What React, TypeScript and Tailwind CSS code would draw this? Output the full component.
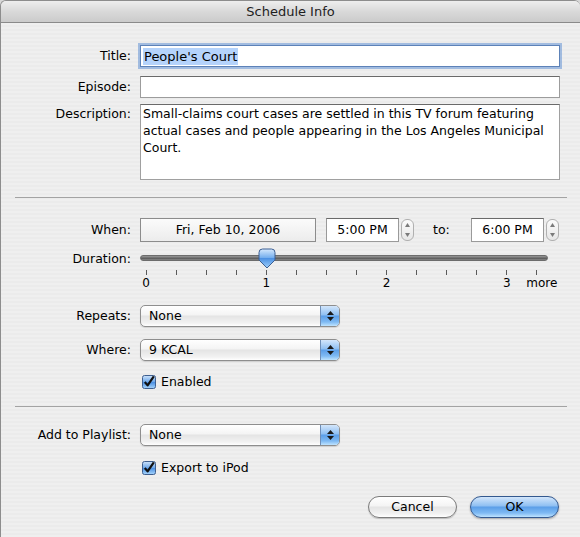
import type { ReactNode } from 'react';

const FONT = "font-['Lucida_Grande','DejaVu_Sans',sans-serif]";

// aqua gloss fills
const GLOSS_WHITE =
  'bg-[linear-gradient(180deg,#ffffff_0%,#f4f4f4_45%,#e4e4e4_50%,#f2f2f2_85%,#ffffff_100%)]';
const GLOSS_BLUE =
  'bg-[linear-gradient(180deg,#d3e6fb_0%,#8ebff2_45%,#5b9ee8_50%,#7fbaf3_80%,#bfe4ff_100%)]';

const TICKS = [
  '0', '', '', '', '1', '', '', '', '2', '', '', '', '3', 'more',
];

function Row({ label, children, className = '' }: { label?: string; children: ReactNode; className?: string }) {
  return (
    <div className={`flex items-center ${className}`}>
      <div className="w-[130px] shrink-0 text-right">{label}</div>
      <div className="ml-[9px] flex items-center">{children}</div>
    </div>
  );
}

function Separator({ className = '' }: { className?: string }) {
  return <div className={`ml-[14px] mr-[13px] h-px bg-[#a3a3a3] ${className}`} />;
}

function PopUp({ value }: { value: string }) {
  return (
    <div
      className={`flex h-[22px] w-[200px] items-stretch overflow-hidden rounded-[5px] border border-[#8e8e8e] ${GLOSS_WHITE} shadow-[0_1px_1px_rgba(0,0,0,0.12)]`}
    >
      <div className="flex flex-1 items-center pl-[8px]">{value}</div>
      <div className={`flex w-[19px] flex-col items-center justify-center gap-[2px] border-l border-[#6f8fb8] ${GLOSS_BLUE}`}>
        <svg width="7" height="4" viewBox="0 0 7 4">
          <path d="M3.5 0 L7 4 H0 Z" fill="#1a1a1a" />
        </svg>
        <svg width="7" height="4" viewBox="0 0 7 4">
          <path d="M0 0 H7 L3.5 4 Z" fill="#1a1a1a" />
        </svg>
      </div>
    </div>
  );
}

function Stepper() {
  return (
    <div className="ml-[2px] flex h-[22px] w-[13px] flex-col items-center justify-between rounded-[6px] border border-[#b0b0b0] bg-[linear-gradient(180deg,#fbfbfb,#e6e6e6)] py-[3px]">
      <svg width="5" height="4" viewBox="0 0 5 4">
        <path d="M2.5 0 L5 4 H0 Z" fill="#7a7a7a" />
      </svg>
      <svg width="5" height="4" viewBox="0 0 5 4">
        <path d="M0 0 H5 L2.5 4 Z" fill="#7a7a7a" />
      </svg>
    </div>
  );
}

function Check({ label, className = '' }: { label: string; className?: string }) {
  return (
    <div className={`flex h-[14px] items-center ${className}`}>
      <div className="w-[130px] shrink-0" />
      <div className="ml-[11px] flex items-center leading-[14px]">
        <svg width="14" height="14" viewBox="0 0 14 14">
          <defs>
            <linearGradient id="cb" x1="0" y1="0" x2="0" y2="1">
              <stop offset="0" stopColor="#cfe4fb" />
              <stop offset="0.5" stopColor="#6ba6ea" />
              <stop offset="0.52" stopColor="#4a8fe2" />
              <stop offset="1" stopColor="#a9d6fc" />
            </linearGradient>
          </defs>
          <rect x="0.5" y="0.5" width="13" height="13" rx="2" fill="url(#cb)" stroke="#3f5f8f" />
          <path d="M2.8 7 L5.6 10.4 L11.8 1.4" fill="none" stroke="#111" strokeWidth="2.2" strokeLinejoin="round" />
        </svg>
        <span className="ml-[5px]">{label}</span>
      </div>
    </div>
  );
}

function Duration() {
  return (
    <div className="w-[408px]">
      {/* track + thumb */}
      <div className="relative flex h-[22px] items-center">
        <div className="h-[6px] w-full rounded-full border border-[#6c6c6c] bg-[linear-gradient(180deg,#9a9a9a,#5e5e5e_60%,#8a8a8a)]" />
        <svg className="absolute left-[118px] top-[1px]" width="18" height="21" viewBox="0 0 18 21">
          <defs>
            <linearGradient id="th" x1="0" y1="0" x2="0" y2="1">
              <stop offset="0" stopColor="#d6e9fd" />
              <stop offset="0.45" stopColor="#76afee" />
              <stop offset="0.5" stopColor="#4d91e3" />
              <stop offset="1" stopColor="#9fd0fb" />
            </linearGradient>
          </defs>
          <path
            d="M1 4.5 Q1 1 4.5 1 H13.5 Q17 1 17 4.5 V12 L9 20 L1 12 Z"
            fill="url(#th)"
            stroke="#3d5f92"
          />
        </svg>
      </div>
      {/* tick marks and scale */}
      <div className="ml-[6px] mt-[1px] flex w-[391px] justify-between text-[12px]">
        {TICKS.map((t, i) => (
          <div key={i} className="flex w-0 flex-col items-center">
            <div className="h-[5px] min-w-px border-l border-[#5a5a5a]" />
            <div className={`h-[16px] whitespace-nowrap pt-[1px] leading-[15px] ${t === 'more' ? 'pl-[10px]' : ''}`}>{t}</div>
          </div>
        ))}
      </div>
    </div>
  );
}

export default function App() {
  return (
    <div className={`h-[537px] w-[580px] overflow-hidden bg-[#d8d8d8] ${FONT} text-[12.5px] text-black`}>
      <div className="flex h-full flex-col overflow-hidden rounded-t-[6px] border-l border-t border-[#8d8d8d]">
        {/* title bar */}
        <div className="flex h-[22px] shrink-0 items-center justify-center border-b border-[#8a8a8a] bg-[linear-gradient(180deg,#eeeeee,#d9d9d9_50%,#cbcbcb)] text-[13px] text-[#1e1e1e]">
          Schedule Info
        </div>

        <div className="flex-1 bg-[repeating-linear-gradient(180deg,#efefef_0px,#efefef_2px,#ebebeb_2px,#ebebeb_4px)] pt-[22px]">
          <Row label="Title:">
            <div className="flex h-[22px] w-[420px] items-center border border-[#5d82b8] bg-white pl-[2px] shadow-[0_0_0_2px_rgba(120,160,215,0.65)]">
              <span className="bg-[#b5d3fb] px-[1px] text-[13px] leading-[17px]">People's Court</span>
            </div>
          </Row>

          <Row label="Episode:" className="mt-[9px]">
            <div className="h-[22px] w-[420px] border border-[#9c9c9c] border-t-[#6a6a6a] bg-white" />
          </Row>

          <div className="mt-[6px] flex">
            <div className="w-[130px] shrink-0 pt-[1px] text-right leading-[17px]">Description:</div>
            <div className="ml-[9px] h-[76px] w-[420px] border border-[#a0a0a0] border-t-[#6a6a6a] bg-white px-[2px] pt-0 leading-[17px]">
              Small-claims court cases are settled in this TV forum featuring actual cases and people appearing in the Los Angeles Municipal Court.
            </div>
          </div>

          <Separator className="mt-[17px]" />

          <Row label="When:" className="mt-[20px]">
            <div className="flex h-[24px] w-[176px] items-center justify-center border border-[#8c8c8c] bg-[linear-gradient(180deg,#fbfbfb,#ececec)]">
              Fri, Feb 10, 2006
            </div>
            <div className="ml-[10px] flex h-[24px] w-[73px] items-center justify-center border border-[#9a9a9a] border-t-[#6a6a6a] bg-white">
              5:00 PM
            </div>
            <Stepper />
            <span className="ml-[19px] w-[38px]">to:</span>
            <div className="flex h-[24px] w-[73px] items-center justify-center border border-[#9a9a9a] border-t-[#6a6a6a] bg-white">
              6:00 PM
            </div>
            <Stepper />
          </Row>

          <div className="mt-[5px] flex items-start">
            <div className="flex h-[24px] w-[130px] shrink-0 items-center justify-end">Duration:</div>
            <div className="ml-[9px]">
              <Duration />
            </div>
          </div>

          <Row label="Repeats:" className="mt-[14px]">
            <PopUp value="None" />
          </Row>

          <Row label="Where:" className="mt-[12px]">
            <PopUp value="9 KCAL" />
          </Row>

          <Check label="Enabled" className="mt-[14px]" />

          <Separator className="mt-[17px]" />

          <Row label="Add to Playlist:" className="mt-[17px]">
            <PopUp value="None" />
          </Row>

          <Check label="Export to iPod" className="mt-[15px]" />

          <div className="mr-[21px] mt-[21px] flex justify-end gap-[13px]">
            <button
              className={`h-[22px] w-[89px] rounded-full border border-[#7b7b7b] ${GLOSS_WHITE} shadow-[0_1px_1px_rgba(0,0,0,0.2)]`}
            >
              Cancel
            </button>
            <button
              className={`h-[22px] w-[89px] rounded-full border border-[#34598f] ${GLOSS_BLUE} shadow-[0_1px_2px_rgba(0,0,0,0.3)]`}
            >
              OK
            </button>
          </div>
        </div>
      </div>
    </div>
  );
}
